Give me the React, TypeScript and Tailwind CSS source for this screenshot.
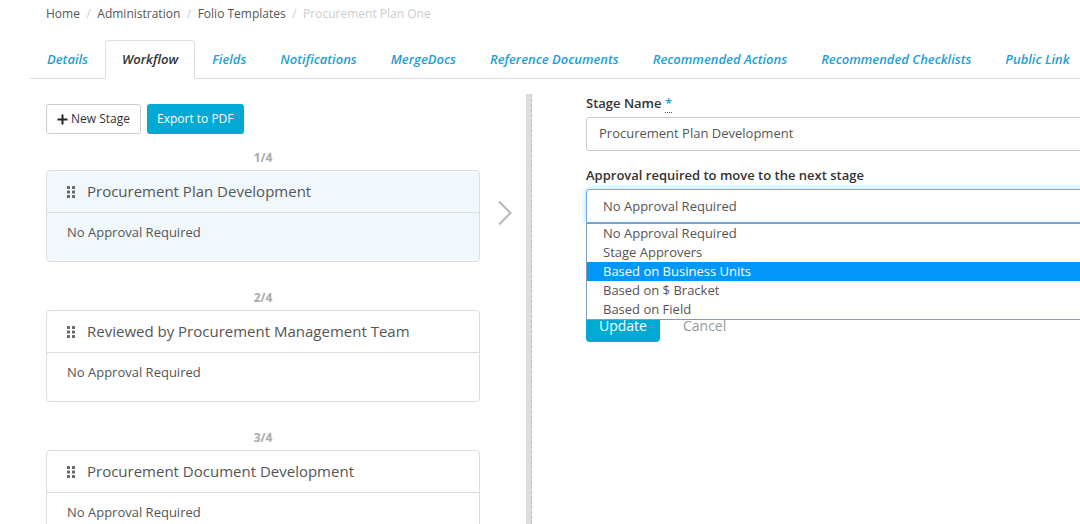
import React from 'react';

const tabs = [
  'Details',
  'Workflow',
  'Fields',
  'Notifications',
  'MergeDocs',
  'Reference Documents',
  'Recommended Actions',
  'Recommended Checklists',
  'Public Link',
];

const stages = [
  { n: '1/4', title: 'Procurement Plan Development', active: true },
  { n: '2/4', title: 'Reviewed by Procurement Management Team', active: false },
  { n: '3/4', title: 'Procurement Document Development', active: false },
];

const options = ['No Approval Required', 'Stage Approvers', 'Based on Business Units', 'Based on $ Bracket', 'Based on Field'];

function DragDots() {
  return (
    <svg width="8" height="12" viewBox="0 0 8 12" className="shrink-0">
      {[0, 4.5, 9].map((y) => (
        <g key={y}>
          <rect x="0" y={y} width="3" height="3" rx="0.5" fill="#666" />
          <rect x="5" y={y} width="3" height="3" rx="0.5" fill="#666" />
        </g>
      ))}
    </svg>
  );
}

function Chevron() {
  return (
    <svg width="16" height="26" viewBox="0 0 16 26">
      <path d="M2 1.5 L13.5 13 L2 24.5" fill="none" stroke="#bbb" strokeWidth="2.2" />
    </svg>
  );
}

function StageCard({ n, title, active }: { n: string; title: string; active: boolean }) {
  return (
    <div className="flex flex-col">
      <div className="w-[434px] text-center text-[12px] font-bold leading-[16px] text-[#aaa] mb-[4px]">{n}</div>
      <div className="flex items-center">
        <div className={`w-[434px] rounded-[4px] border border-[#dddddd] ${active ? 'bg-[#f0f8fc]' : 'bg-white'}`}>
          <div className="flex h-[42px] items-center gap-[12px] border-b border-[#dddddd] pl-[20px]">
            <DragDots />
            <span className="text-[15px] text-[#555]">{title}</span>
          </div>
          <div className="h-[48px] pl-[20px] pt-[10px] text-[13px] text-[#555]">No Approval Required</div>
        </div>
        {active && (
          <div className="ml-[17px] mt-[-6px]">
            <Chevron />
          </div>
        )}
      </div>
    </div>
  );
}

export default function App() {
  return (
    <div className="h-[524px] w-[1080px] overflow-hidden bg-white" style={{ fontFamily: '"Open Sans", sans-serif' }}>
      {/* breadcrumb */}
      <div className="flex h-[26px] items-center gap-[6.5px] pl-[46px] pt-[1px] text-[12px] text-[#555]">
        <span>Home</span>
        <span className="text-[#ccc]">/</span>
        <span>Administration</span>
        <span className="text-[#ccc]">/</span>
        <span>Folio Templates</span>
        <span className="text-[#ccc]">/</span>
        <span className="text-[#ccc]">Procurement Plan One</span>
      </div>

      {/* tabs */}
      <div className="ml-[30px] mt-[14px] flex border-b border-[#dddddd]">
        {tabs.map((t) => (
          <div
            key={t}
            className={`-mb-px flex h-[39px] items-center whitespace-nowrap px-[16px] text-[13px] font-semibold italic ${
              t === 'Workflow'
                ? 'rounded-t-[4px] border border-b-white border-[#dddddd] bg-white text-[#333]'
                : 'border border-transparent text-[#1ea0d2]'
            }`}
          >
            {t}
          </div>
        ))}
      </div>

      <div className="flex">
        {/* left pane */}
        <div className="w-[526px] shrink-0 pl-[46px] pt-[25px]">
          <div className="flex gap-[6px]">
            <button className="flex h-[30px] items-center gap-[3px] rounded-[3px] border border-[#ccc] bg-white pl-[10px] pr-[10px] text-[12px] text-[#333]">
              <svg width="11" height="11" viewBox="0 0 11 11">
                <path d="M5.5 0.5 V10.5 M0.5 5.5 H10.5" stroke="#222" strokeWidth="2" />
              </svg>
              New Stage
            </button>
            <button className="h-[30px] rounded-[3px] bg-[#00aad4] px-[10px] text-[12px] text-white">Export to PDF</button>
          </div>
          <div className="mt-[16px] flex flex-col gap-[28px]">
            {stages.map((s) => (
              <StageCard key={s.n} {...s} />
            ))}
          </div>
        </div>

        {/* divider */}
        <div className="mt-[15px] h-[440px] w-[6px] shrink-0 border-r border-dashed border-r-[#bbb] bg-[#dddddd]" />

        {/* right pane */}
        <div className="w-[560px] shrink-0 pl-[54px] pt-[15px]">
          <div className="text-[13px] font-semibold leading-[18px] text-[#333]">
            Stage Name <span className="border-b border-dotted border-[#555] text-[#1ea0d2]">*</span>
          </div>
          <div className="mt-[5px] flex h-[34px] items-center rounded-[3px] border border-[#ccc] pl-[12px] text-[13px] text-[#555]">
            Procurement Plan Development
          </div>

          <div className="mt-[15px] text-[13px] font-semibold leading-[18px] text-[#333]">Approval required to move to the next stage</div>
          <div className="relative mt-[5px]">
            <div className="flex h-[34px] items-center rounded-t-[3px] border border-[#66afe9] pl-[16px] pt-[1px] text-[13px] text-[#555] shadow-[0_0_6px_rgba(102,175,233,0.5)]">
              No Approval Required
            </div>
            <div className="absolute left-0 right-0 top-[34px] z-10 border border-[#7f9db9] bg-white">
              {options.map((o) => (
                <div
                  key={o}
                  className={`flex h-[19px] items-center pl-[16px] text-[13px] ${
                    o === 'Based on Business Units' ? 'bg-[#0096fa] text-white' : 'text-[#555]'
                  }`}
                >
                  {o}
                </div>
              ))}
            </div>
          </div>

          <div className="mt-[85px] flex items-center gap-[23px]">
            <button className="h-[34px] rounded-[4px] bg-[#00aad4] px-[13px] text-[14px] text-white">Update</button>
            <span className="text-[14px] text-[#999]">Cancel</span>
          </div>
        </div>
      </div>
    </div>
  );
}
